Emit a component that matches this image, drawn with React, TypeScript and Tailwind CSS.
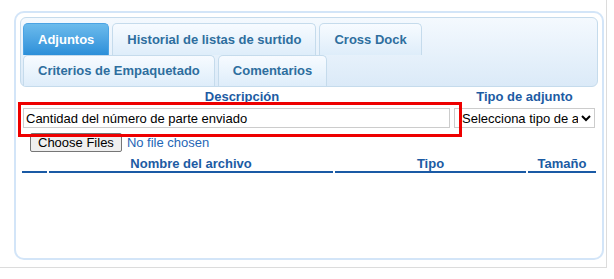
import React from 'react';

const tabs = [
  'Adjuntos',
  'Historial de listas de surtido',
  'Cross Dock',
  'Criterios de Empaquetado',
  'Comentarios',
];

const columns = [
  { label: '', width: 'w-[25px]' },
  { label: 'Nombre del archivo', width: 'w-[284px]' },
  { label: 'Tipo', width: 'w-[191px]' },
  { label: 'Tamaño', width: 'w-[68px]' },
];

const App: React.FC = () => {
  return (
    <div className="w-[607px] h-[268px] border-r border-b border-[#dcdcdc] bg-white pt-[11px] pl-[14px] font-['Liberation_Sans',Arial,sans-serif]">
      <div className="w-[590px] h-[249px] rounded-[10px] border-2 border-[#d3e5f8] p-[4px]">
        {/* pestañas */}
        <ul className="flex flex-wrap rounded-[6px] border border-[#c5dbec] bg-linear-to-b from-[#f4f9fe] to-[#dbeaf8] pt-[5px] pl-[2px]">
          {tabs.map((t, i) => (
            <li
              key={t}
              className={
                i === 0
                  ? 'mr-[3px] flex h-[31.5px] items-center rounded-t-[5px] border border-b-0 border-[#4aa3e4] bg-linear-to-b from-[#6bbbec] to-[#2b8fd9] px-[14px] text-[13px] font-bold text-white'
                  : 'mr-[3px] flex h-[31.5px] items-center rounded-t-[5px] border border-b-0 border-[#c5dbec] bg-linear-to-b from-[#f7fbff] to-[#deedfa] px-[14px] text-[13px] font-bold text-[#2e6e9e]'
              }
            >
              {t}
            </li>
          ))}
        </ul>

        {/* etiquetas */}
        <div className="mt-[2px] flex text-[13px] font-bold leading-[15px] text-[#1c5ba3]">
          <div className="ml-[2px] w-[440px] text-center">Descripción</div>
          <div className="w-[125px] text-center">Tipo de adjunto</div>
        </div>

        <div className="relative mt-[4px] flex">
          <input
            defaultValue="Cantidad del número de parte enviado"
            className="ml-[3px] h-[20px] w-[427px] border border-[#cccccc] bg-white px-[2px] text-[13px] text-black outline-none"
          />
          <select className="ml-[4px] h-[20px] w-[141px] border border-[#cccccc] bg-white pl-[3px] text-[13px] text-black">
            <option>Selecciona tipo de adjunto</option>
          </select>
          {/* marca roja */}
          <div className="pointer-events-none absolute left-[-2px] top-[-6px] z-10 h-[35px] w-[444px] border-[3px] border-[#ee0000]" />
        </div>

        <div className="mt-[5px] ml-[10px] flex">
          <input
            type="file"
            multiple
            className="text-[13px] leading-[15px] text-[#1f66b5] file:mr-[5px] file:rounded-[2px] file:border file:border-[#767676] file:bg-[#efefef] file:px-[7px] file:py-[1px] file:text-black"
          />
        </div>

        {/* encabezado tabla */}
        <div className="mt-[4px] flex gap-[2px] px-[2px]">
          {columns.map((c, i) => (
            <div
              key={i}
              className={`${c.width} h-[17px] border-b-2 border-[#1a5aa5] text-center text-[13px] font-bold leading-[15px] text-[#1c5ba3]`}
            >
              {c.label}
            </div>
          ))}
        </div>
      </div>
    </div>
  );
};

export default App;
